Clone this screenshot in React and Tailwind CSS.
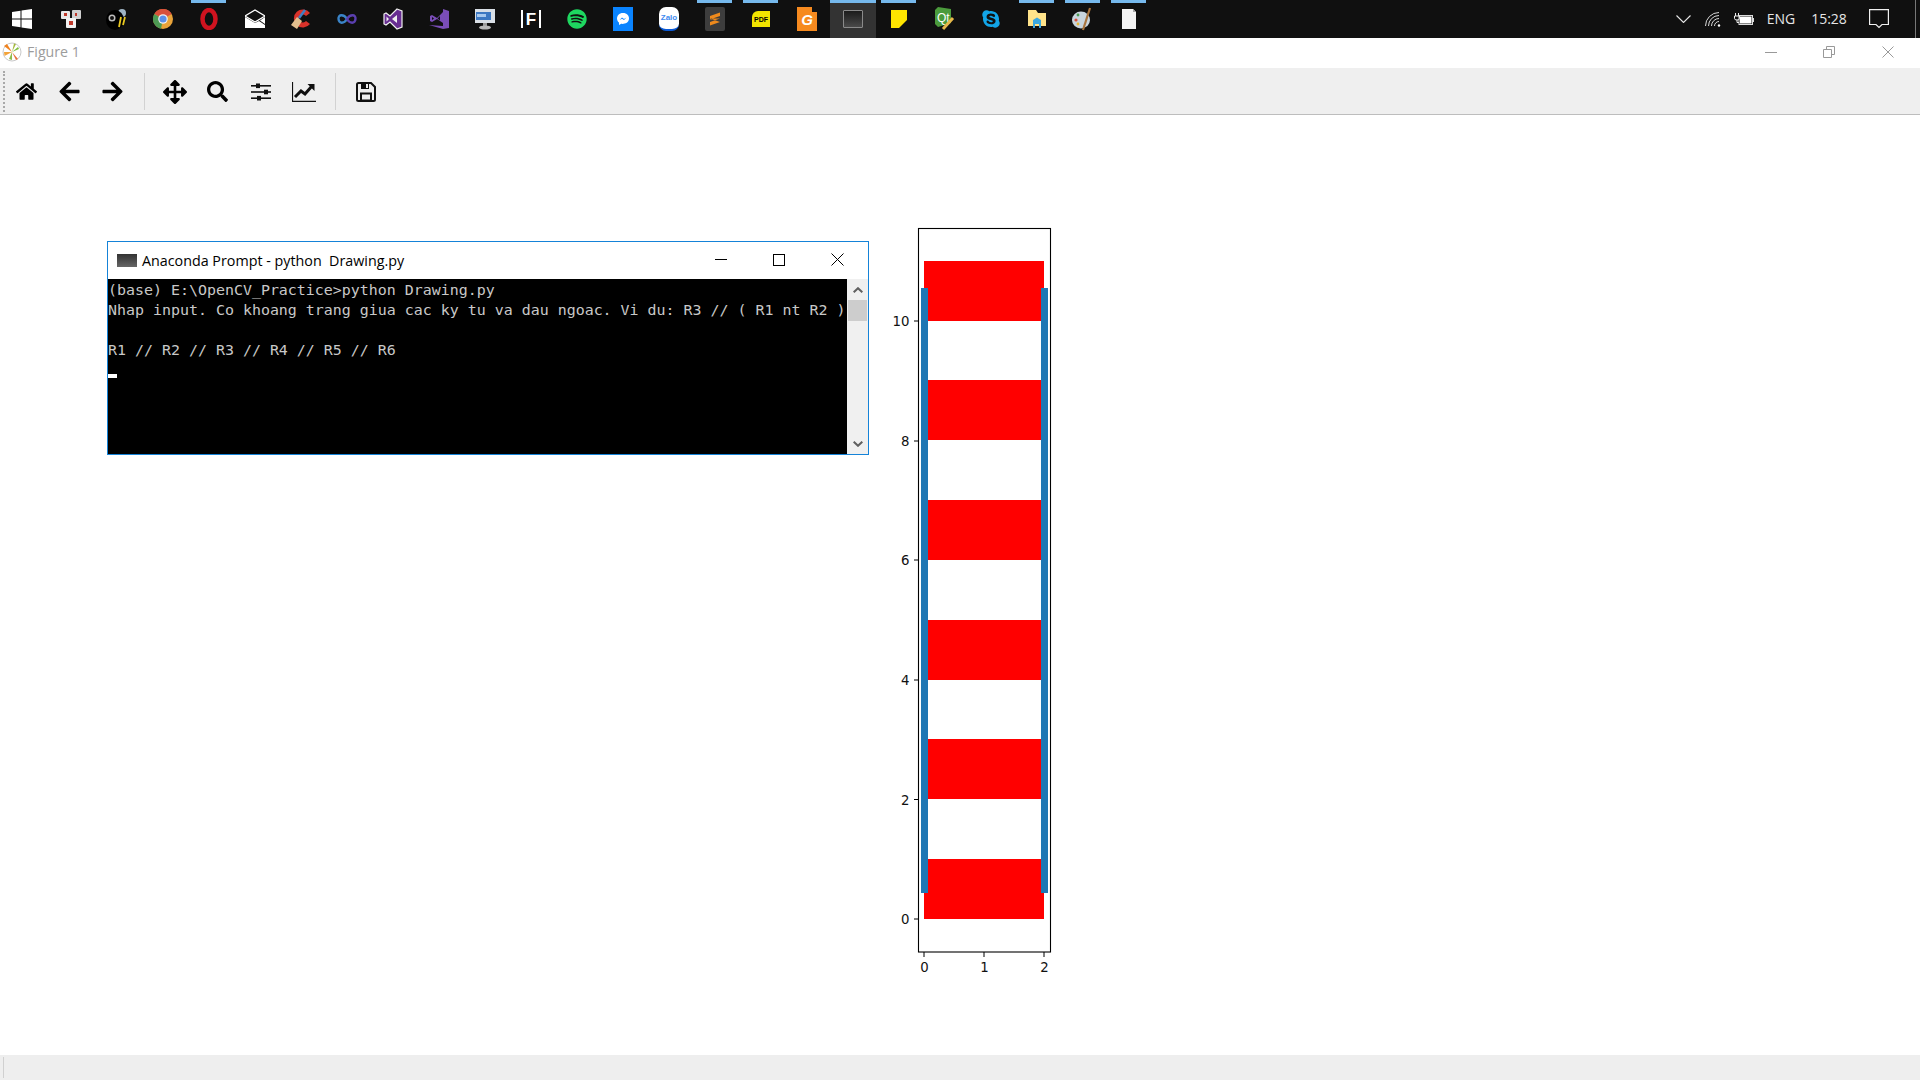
import { FaHome, FaArrowLeft, FaArrowRight, FaArrowsAlt, FaSearch, FaSpotify, FaSkype } from "react-icons/fa";

const sans = "font-['Open_Sans',sans-serif]";

function Tiles() {
  return (
    <svg width="22" height="20" viewBox="0 0 22 20">
      <rect x="1" y="2" width="9" height="8" rx="1" fill="#e8e8e8" />
      <rect x="12" y="1" width="9" height="9" rx="1" fill="#d0d0d0" />
      <rect x="6" y="9" width="10" height="10" rx="1" fill="#f2f2f2" />
      <rect x="4" y="4" width="3" height="3" fill="#c0392b" />
      <rect x="15" y="4" width="2" height="3" fill="#c0392b" />
      <rect x="9" y="12" width="4" height="4" fill="#c0392b" />
    </svg>
  );
}

function Bee() {
  return (
    <svg width="22" height="24" viewBox="0 0 22 24">
      <ellipse cx="16" cy="6" rx="4" ry="4" fill="#9fb4c4" />
      <ellipse cx="9" cy="13" rx="9" ry="10" fill="#000" />
      <circle cx="6" cy="11" r="3.5" fill="#bbb" />
      <circle cx="6" cy="11" r="2" fill="#111" />
      <path d="M13 20 L15 10 M17 18 L19 10" stroke="#e8c820" strokeWidth="1.8" />
    </svg>
  );
}

function Chrome() {
  return (
    <svg width="20" height="20" viewBox="0 0 20 20">
      <circle cx="10" cy="10" r="10" fill="#e8a33a" />
      <path d="M10 10 L1.3 5 A10 10 0 0 1 18.7 5 Z" fill="#d8503a" />
      <path d="M10 10 L1.3 5 A10 10 0 0 0 8 19.8 Z" fill="#4c9a54" />
      <circle cx="10" cy="10" r="4.8" fill="#f1f1f1" />
      <circle cx="10" cy="10" r="3.6" fill="#5b8fe8" />
    </svg>
  );
}

function Opera() {
  return (
    <svg width="20" height="22" viewBox="0 0 20 22">
      <ellipse cx="10" cy="11" rx="6.5" ry="9" fill="none" stroke="#d0131f" strokeWidth="4.5" />
    </svg>
  );
}

function Mail() {
  return (
    <svg width="20" height="20" viewBox="0 0 20 20">
      <path d="M0 7 L10 1 L20 7 L10 13 Z" fill="none" stroke="#fff" strokeWidth="1.4" />
      <path d="M0 8 L10 14 L14 12 L20 16 L20 19 L0 19 Z" fill="#fff" />
      <path d="M20 8 V15 L15 11.5 Z" fill="#fff" />
    </svg>
  );
}

function CCleaner() {
  return (
    <svg width="22" height="22" viewBox="0 0 22 22">
      <path d="M20 5 A9 9 0 1 0 20 16 L16 13 A4 4 0 1 1 16 8 Z" fill="#d9322a" />
      <path d="M15 2 L9 10" stroke="#3f7fc4" strokeWidth="2.5" />
      <path d="M7 9 L12 13 L7 21 L1 17 Z" fill="#e2bf8e" />
    </svg>
  );
}

function Infinity() {
  return (
    <svg width="20" height="12" viewBox="0 0 20 12">
      <path d="M10 6 C7 1 1 1 1.5 6 C2 11 7 11 10 6 Z" fill="none" stroke="#3a84c8" strokeWidth="2.4" />
      <path d="M10 6 C13 1 19 1 18.5 6 C18 11 13 11 10 6 Z" fill="none" stroke="#5b3fb0" strokeWidth="2.4" />
    </svg>
  );
}

function VsWhite() {
  return (
    <svg width="20" height="22" viewBox="0 0 20 22">
      <path d="M14 1 L19 3 V19 L14 21 L7 14 L3 17 L1 16 V6 L3 5 L7 8 Z" fill="#672d91" stroke="#f0f0f0" strokeWidth="1.2" />
      <path d="M14 7 L9 11 L14 15 Z M3.5 8.5 L6 11 L3.5 13.5 Z" fill="#f0f0f0" />
    </svg>
  );
}

function Vs() {
  return (
    <svg width="20" height="22" viewBox="0 0 20 22">
      <path d="M14 1 L20 3 V20 L14 21 L0 17 L14 18 Z" fill="#7a4db8" />
      <path d="M14 4 V15 L8 11 L3 14 L1 13 V8 L3 7 L8 10 Z" fill="#7a4db8" />
      <path d="M11 8 L8.5 10.5 L11 12.5 Z M3 9 V12 L5 10.5 Z" fill="#101010" />
    </svg>
  );
}

function Monitor() {
  return (
    <svg width="22" height="22" viewBox="0 0 22 22">
      <rect x="1" y="1" width="20" height="14" fill="#d9dfe6" />
      <rect x="2" y="4" width="15" height="8" fill="#3d78c2" />
      <rect x="3" y="6" width="9" height="3" fill="#a7c8ee" />
      <rect x="9" y="15" width="4" height="3" fill="#999" />
      <ellipse cx="11" cy="19.5" rx="6" ry="2" fill="#b8b8b8" />
    </svg>
  );
}

function FBox() {
  return (
    <div className="flex items-center gap-[3px]">
      <div className="w-[2px] h-[18px] bg-white" />
      <span className="font-['Liberation_Sans',sans-serif] font-bold text-[17px] leading-none text-white">F</span>
      <div className="w-[2px] h-[18px] bg-white" />
    </div>
  );
}

function Messenger() {
  return (
    <div className="w-5 h-6 bg-[#0a84ff] flex items-center justify-center">
      <svg width="14" height="14" viewBox="0 0 14 14">
        <path d="M7 1 C3 1 1 3.5 1 6.5 C1 8.5 2 9.8 3 10.6 V13 L5.2 11.8 C8 12.4 13 11 13 6.5 C13 3.5 11 1 7 1 Z" fill="#fff" />
        <path d="M3.5 8 L6 5.5 L8 7 L10.5 5.5 L8 8 L6 6.8 Z" fill="#0a84ff" />
      </svg>
    </div>
  );
}

function Zalo() {
  return (
    <div className="w-5 h-6 rounded-[7px] bg-white border-b-2 border-[#0a5ad8] flex items-center justify-center">
      <span className="font-['Liberation_Sans',sans-serif] font-bold text-[8px] text-[#3f8af0]">Zalo</span>
    </div>
  );
}

function Sublime() {
  return (
    <div className="w-5 h-6 rounded-[2px] bg-[#3d3d3d] flex items-center justify-center">
      <svg width="12" height="14" viewBox="0 0 12 14">
        <path d="M1 4 L11 0.5 V4 L1 7.5 Z M1 6.5 L11 10 V6.5 M1 10 L11 6.5 V10 L1 13.5 Z" fill="#ef8a1c" />
      </svg>
    </div>
  );
}

function Pdf() {
  return (
    <div className="relative w-[18px] h-4 rounded-tl-[6px] bg-[#f2e400] flex items-center justify-center">
      <span className="font-['Liberation_Sans',sans-serif] font-bold text-[7px] leading-none text-black">PDF</span>
    </div>
  );
}

function Foxit() {
  return (
    <div className="relative w-5 h-6 bg-[#f68a1f] flex items-center justify-center">
      <div className="absolute right-0 top-0 w-[5px] h-[5px] bg-[#101010]" />
      <span className="font-['Liberation_Sans',sans-serif] font-bold italic text-[15px] leading-none text-white">G</span>
    </div>
  );
}

function ConsoleIcon() {
  return (
    <div className="w-5 h-[18px] rounded-[1px] bg-gradient-to-b from-[#1c1c1c] to-[#4a4a4a] border border-[#8a8a8a]" />
  );
}

function Sticky() {
  return (
    <svg width="16" height="20" viewBox="0 0 16 20">
      <path d="M0 1 H16 V19 H0 Z" fill="#ffe500" />
      <path d="M16 11 V19 H8 Z" fill="#101010" />
    </svg>
  );
}

function Qt() {
  return (
    <svg width="20" height="24" viewBox="0 0 20 24">
      <path d="M3 0 L16 2 V16 L3 20 L0 17 V3 Z" fill="#4b9b3c" />
      <text x="2" y="15" fontSize="12" fontFamily="Liberation Sans" fill="#fff">Qt</text>
      <path d="M18 11 L8 22" stroke="#e8b84a" strokeWidth="3" />
    </svg>
  );
}

function Folder() {
  return (
    <svg width="18" height="20" viewBox="0 0 18 20">
      <path d="M0 1 H8 L10 4 H18 V17 H0 Z" fill="#ffe38a" />
      <path d="M5 11 L9 8.5 L13 11 V19 H11 V15 H7 V19 H5 Z" fill="#3ba8e0" />
    </svg>
  );
}

function Paint() {
  return (
    <svg width="22" height="24" viewBox="0 0 22 24">
      <ellipse cx="9" cy="13" rx="9" ry="8.5" fill="#c9d5de" />
      <circle cx="4" cy="13" r="1.6" fill="#d8503a" />
      <circle cx="6" cy="8" r="1.4" fill="#4c9a54" />
      <circle cx="6" cy="17" r="1.4" fill="#e8b83a" />
      <path d="M18 1 L11 23" stroke="#a8743e" strokeWidth="2.2" />
    </svg>
  );
}

function Note() {
  return (
    <svg width="14" height="20" viewBox="0 0 14 20">
      <path d="M0 0 H11 L14 3 V20 H0 Z" fill="#f4f4f4" />
      <path d="M11 0 V3 H14 Z" fill="#a8a8a8" />
    </svg>
  );
}

const taskIcons = [
  { icon: <Tiles /> },
  { icon: <Bee /> },
  { icon: <Chrome /> },
  { icon: <Opera />, running: true },
  { icon: <Mail /> },
  { icon: <CCleaner /> },
  { icon: <Infinity /> },
  { icon: <VsWhite /> },
  { icon: <Vs /> },
  { icon: <Monitor /> },
  { icon: <FBox /> },
  { icon: <FaSpotify size={20} color="#1ed760" /> },
  { icon: <Messenger /> },
  { icon: <Zalo /> },
  { icon: <Sublime />, running: true },
  { icon: <Pdf />, running: true },
  { icon: <Foxit /> },
  { icon: <ConsoleIcon />, active: true },
  { icon: <Sticky />, running: true },
  { icon: <Qt /> },
  { icon: <FaSkype size={20} color="#12a5e8" /> },
  { icon: <Folder />, running: true },
  { icon: <Paint />, running: true },
  { icon: <Note />, running: true },
];

function Taskbar() {
  return (
    <div className="flex h-[38px] shrink-0 bg-[#101010]">
      <div className="flex h-full w-[48px] items-center justify-start pl-[12px]">
        <svg width="20" height="20" viewBox="0 0 20 20" fill="#fff">
          <path d="M0 3 L8.5 1.8 V9.4 H0 Z M9.5 1.6 L20 0 V9.4 H9.5 Z M0 10.4 H8.5 V18.2 L0 17 Z M9.5 10.4 H20 V20 L9.5 18.4 Z" />
        </svg>
      </div>
      {taskIcons.map((t, i) => (
        <div
          key={i}
          className={`relative flex h-full w-[46px] items-center justify-center ${t.active ? "bg-[#333333]" : ""}`}
        >
          {t.running && <div className="absolute top-0 left-[5px] w-[35px] h-[3px] bg-[#76b9ed]" />}
          {t.active && <div className="absolute top-0 left-0 w-[46px] h-[3px] bg-[#76b9ed]" />}
          {t.icon}
        </div>
      ))}
      <div className={`ml-auto flex h-full items-center text-[14px] text-[#e6e6e6] ${sans}`}>
        <div className="flex w-[30px] justify-center">
          <svg width="15" height="8" viewBox="0 0 15 8" fill="none" stroke="#e6e6e6" strokeWidth="1.1">
            <path d="M0.5 0.5 L7.5 7.5 L14.5 0.5" />
          </svg>
        </div>
        <div className="flex w-[30px] justify-center">
          <svg width="16" height="15" viewBox="0 0 16 15" fill="none" stroke="#d8d8d8" strokeWidth="1">
            <path d="M0.5 14 A13.5 13.5 0 0 1 14 0.5" />
            <path d="M3.5 14 A10.5 10.5 0 0 1 14 3.5" />
            <path d="M6.5 14 A7.5 7.5 0 0 1 14 6.5" />
            <path d="M9.5 14 A4.5 4.5 0 0 1 14 9.5" />
            <circle cx="14" cy="13.5" r="1.2" fill="#fff" stroke="none" />
          </svg>
        </div>
        <div className="flex w-[32px] justify-center">
          <svg width="20" height="13" viewBox="0 0 20 13" fill="none">
            <path d="M1.5 0 V3 M4.5 0 V3 M0.5 3 H5.5 V5.5 Q5.5 7 3 7 Q0.5 7 0.5 5.5 Z M3 7 V9.5 H5" stroke="#eee" strokeWidth="1" />
            <rect x="5" y="2.5" width="13.5" height="9" stroke="#ddd" strokeWidth="1" />
            <rect x="6" y="3.5" width="11.5" height="7" fill="#fff" />
            <rect x="18.5" y="5" width="1.5" height="4" fill="#ddd" />
          </svg>
        </div>
        <div className="w-[42px] pb-px text-center">ENG</div>
        <div className="w-[54px] pb-px text-center">15:28</div>
        <div className="flex w-[46px] justify-center">
          <svg width="20" height="20" viewBox="0 0 20 20" fill="none" stroke="#f0f0f0" strokeWidth="1.2">
            <path d="M0.6 0.6 H19.4 V15.5 H13 L10 18.5 L7 15.5 H0.6 Z" />
          </svg>
        </div>
        <div className="w-[13px]" />
        <div className="h-full w-px bg-[#777]" />
        <div className="w-[4px]" />
      </div>
    </div>
  );
}

function FigureLogo() {
  return (
    <svg width="20" height="20" viewBox="0 0 20 20">
      <circle cx="10" cy="10" r="9" fill="#fff" stroke="#c9c9c9" strokeWidth="1" />
      <path d="M10 10 L2 4 L5 2 Z" fill="#f0821e" />
      <path d="M10 10 L2 10 L2.5 14 Z" fill="#f2a33a" />
      <path d="M10 10 L14 2 L12 1.5 Z" fill="#a4b83c" />
      <path d="M10 10 L17 7 L16 5 Z" fill="#7fbf3f" />
      <path d="M10 10 L16 17 L14 18 Z" fill="#e8703a" />
      <path d="M10 10 L10 18 L7 17 Z" fill="#8fbc4c" />
    </svg>
  );
}

function FigureTitle() {
  return (
    <div className={`flex h-[30px] shrink-0 items-center bg-white pb-[2px] ${sans}`}>
      <div className="ml-[2px]">
        <FigureLogo />
      </div>
      <span className="ml-[5px] text-[14.2px] text-[#9c9c9c]">Figure 1</span>
      <div className="ml-auto flex items-center">
        <div className="w-[12px] h-px bg-[#999]" />
        <svg className="ml-[46px]" width="12" height="12" viewBox="0 0 12 12" fill="none" stroke="#999">
          <path d="M0.5 3.5 H8.5 V11.5 H0.5 Z M3.5 3.5 V0.5 H11.5 V8.5 H8.5" />
        </svg>
        <svg className="ml-[47px] mr-[26px]" width="12" height="12" viewBox="0 0 12 12" fill="none" stroke="#999">
          <path d="M0.5 0.5 L11.5 11.5 M11.5 0.5 L0.5 11.5" />
        </svg>
      </div>
    </div>
  );
}

function ToolButton({ children }) {
  return <div className="flex h-full w-[43px] items-center justify-center text-black">{children}</div>;
}

function Toolbar() {
  return (
    <div className="flex h-[47px] shrink-0 items-center border-b border-[#bdbdbd] bg-[#efefef]">
      <div className="ml-[3px] h-[41px] w-px border-l-2 border-dotted border-[#a8a8a8]" />
      <div className="flex h-full pt-px">
        <ToolButton><FaHome size={21} /></ToolButton>
        <ToolButton><FaArrowLeft size={23} /></ToolButton>
        <ToolButton><FaArrowRight size={23} /></ToolButton>
        <div className="ml-[10px] mr-[8px] my-[4px] w-px bg-[#d2d2d2]" />
        <ToolButton><FaArrowsAlt size={24} /></ToolButton>
        <ToolButton><FaSearch size={21} /></ToolButton>
        <ToolButton>
          <svg width="20" height="18" viewBox="0 0 20 18" fill="#111">
            <rect x="0" y="2" width="20" height="1.6" />
            <rect x="0" y="8.2" width="20" height="1.6" />
            <rect x="0" y="14.4" width="20" height="1.6" />
            <rect x="5" y="0.5" width="4" height="4.6" />
            <rect x="13" y="6.7" width="4" height="4.6" />
            <rect x="6" y="12.9" width="4" height="4.6" />
          </svg>
        </ToolButton>
        <ToolButton>
          <svg width="24" height="20" viewBox="0 0 24 20" fill="none" stroke="#111">
            <path d="M0.5 0 V19.3 H24" strokeWidth="1.2" />
            <path d="M3 15 L9 9 L13 12 L20 4" strokeWidth="3" />
            <path d="M15.5 2 H22.5 V9 Z" fill="#111" stroke="none" />
          </svg>
        </ToolButton>
        <div className="ml-[10px] mr-[8px] my-[4px] w-px bg-[#d2d2d2]" />
        <ToolButton>
          <svg width="20" height="20" viewBox="0 0 20 20" fill="none" stroke="#111" strokeWidth="2">
            <path d="M2.5 1 H15 L19 5 V17.5 Q19 19 17.5 19 H2.5 Q1 19 1 17.5 V2.5 Q1 1 2.5 1 Z" />
            <path d="M5 11.5 H15 V18.5 H5 Z" />
            <rect x="5" y="1" width="8" height="6" fill="#111" stroke="none" />
            <rect x="10" y="2" width="2" height="4" fill="#efefef" stroke="none" />
          </svg>
        </ToolButton>
      </div>
    </div>
  );
}

function ConsoleWindow() {
  return (
    <div className="ml-[107px] mt-[126px] flex h-[214px] w-[762px] shrink-0 flex-col border border-[#1583d8] bg-white">
      <div className={`flex h-[37px] shrink-0 items-center ${sans}`}>
        <div className="ml-[9px] h-[13px] w-[20px] bg-gradient-to-b from-[#333] to-[#666]" />
        <span className="ml-[5px] text-[14.3px] whitespace-pre text-black">Anaconda Prompt - python  Drawing.py</span>
        <div className="ml-auto flex items-center pb-[2px]">
          <div className="h-px w-[12px] bg-black" />
          <div className="ml-[46px] h-[12px] w-[12px] border border-black" />
          <svg className="ml-[46px] mr-[24px]" width="13" height="13" viewBox="0 0 13 13" fill="none" stroke="#000">
            <path d="M0.5 0.5 L12.5 12.5 M12.5 0.5 L0.5 12.5" />
          </svg>
        </div>
      </div>
      <div className="flex flex-1">
        <div className="flex-1 bg-black pt-px font-['DejaVu_Sans_Mono',monospace] text-[14.95px] leading-[20px] whitespace-pre text-[#c8c8c8]">
          <div>(base) E:\OpenCV_Practice&gt;python Drawing.py</div>
          <div>Nhap input. Co khoang trang giua cac ky tu va dau ngoac. Vi du: R3 // ( R1 nt R2 )</div>
          <div className="h-5" />
          <div>R1 // R2 // R3 // R4 // R5 // R6</div>
          <div className="mt-[14px] h-[4px] w-[9px] bg-white" />
        </div>
        <div className="flex w-[21px] flex-col items-center bg-[#f0f0f0]">
          <svg className="mt-[8px]" width="10" height="6" viewBox="0 0 10 6" fill="none" stroke="#606060" strokeWidth="2">
            <path d="M0.7 5.3 L5 1.2 L9.3 5.3" />
          </svg>
          <div className="mt-[7px] h-[21px] w-[19px] bg-[#cdcdcd]" />
          <svg className="mt-auto mb-[7px]" width="10" height="6" viewBox="0 0 10 6" fill="none" stroke="#606060" strokeWidth="2">
            <path d="M0.7 0.7 L5 4.8 L9.3 0.7" />
          </svg>
        </div>
      </div>
    </div>
  );
}

// chart is drawn in page coordinates: y = 0 sits at 919, one unit is 59.8px
const redBars = [859, 739, 620, 500, 380, 261];
const yTicks = [
  { label: "0", y: 919 },
  { label: "2", y: 799.5 },
  { label: "4", y: 680 },
  { label: "6", y: 560 },
  { label: "8", y: 441 },
  { label: "10", y: 321 },
];
const xTicks = [
  { label: "0", x: 924 },
  { label: "1", x: 984 },
  { label: "2", x: 1044 },
];

function Plot() {
  return (
    <svg className="ml-[21px] mt-[105px] shrink-0" width="180" height="770" viewBox="890 220 180 770">
      {redBars.map((y) => (
        <rect key={y} x="924" y={y} width="120" height="60" fill="#ff0000" />
      ))}
      <rect x="921" y="288" width="7" height="605" fill="#1f77b4" />
      <rect x="1041" y="288" width="7" height="605" fill="#1f77b4" />
      <rect x="918.5" y="228.5" width="132" height="723.5" fill="none" stroke="#000" strokeWidth="1.1" />
      {yTicks.map((t) => (
        <g key={t.label}>
          <line x1="914" x2="918" y1={t.y} y2={t.y} stroke="#000" />
          <text x="909.5" y={t.y + 5} textAnchor="end" fontSize="13.3" fontFamily="DejaVu Sans" fill="#111">
            {t.label}
          </text>
        </g>
      ))}
      {xTicks.map((t) => (
        <g key={t.label}>
          <line x1={t.x} x2={t.x} y1="952" y2="957" stroke="#000" />
          <text x={t.x + 0.5} y="972" textAnchor="middle" fontSize="13.3" fontFamily="DejaVu Sans" fill="#111">
            {t.label}
          </text>
        </g>
      ))}
    </svg>
  );
}

export default function App() {
  return (
    <div className="flex h-screen w-full flex-col overflow-hidden bg-white">
      <Taskbar />
      <FigureTitle />
      <Toolbar />
      <div className="flex min-h-0 flex-1 items-start">
        <ConsoleWindow />
        <Plot />
      </div>
      <div className="flex h-[25px] shrink-0 items-center bg-[#eeeeee] pl-[3px]">
        <div className="h-[21px] w-px bg-[#d0d0d0]" />
      </div>
    </div>
  );
}
